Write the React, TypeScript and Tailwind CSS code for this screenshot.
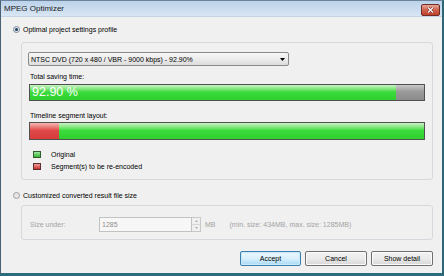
import React from 'react';

// MPEG Optimizer dialog (Vista look, scaled down)

const RadioChecked = () => (
  <span className="w-[7px] h-[7px] rounded-full border border-[#7d8b99] bg-[#dfe8f1] flex items-center justify-center shrink-0">
    <span className="w-[3px] h-[3px] rounded-full bg-[#1e3a5c]" />
  </span>
);

const RadioEmpty = () => (
  <span className="w-[7px] h-[7px] rounded-full border border-[#9c9c9c] bg-[#e6e6e6] shrink-0" />
);

const Button = ({ label, primary }: { label: string; primary?: boolean }) => (
  <div
    className={
      primary
        ? 'w-[61px] h-[15px] rounded-[2px] border border-[#3c7fb1] bg-linear-to-b from-[#eaf6fd] via-[#d9f0fc] to-[#a7d9f5] flex items-center justify-center text-[7px] leading-none shadow-[inset_0_0_0_1px_#c9e9fb]'
        : 'w-[62px] h-[15px] rounded-[2px] border border-[#707070] bg-linear-to-b from-[#f2f2f2] via-[#ebebeb] to-[#d6d6d6] flex items-center justify-center text-[7px] leading-none shadow-[inset_0_0_0_1px_#fbfbfb]'
    }
  >
    {label}
  </div>
);

export default function App() {
  return (
    <div className="w-[444px] h-[276px] flex flex-col bg-[#f0f0f0] border-t border-l border-r-2 border-b-[3px] border-t-[#6c859c] border-l-[#4a6073] border-r-[#2f6676] border-b-[#2a6b7c] font-['Liberation_Sans',Arial,sans-serif] text-black overflow-hidden">
      {/* title bar */}
      <div className="h-[16px] shrink-0 flex justify-between bg-linear-to-b from-[#bcd2ea] to-[#d8e6f4] border-b border-[#c4d4e4]">
        <div className="pl-[3px] pt-[3px] text-[8px] leading-[10px] text-[#1a1a1a]">MPEG Optimizer</div>
        <div className="mt-[3px] mr-[2px] w-[19px] h-[12px] rounded-[2px] border border-[#6e2e24] bg-linear-to-b from-[#e8a595] via-[#d0624e] to-[#c0402c] flex items-center justify-center">
          <svg width="7" height="6" viewBox="0 0 7 6">
            <path d="M1 0.5 L6 5.5 M6 0.5 L1 5.5" stroke="#5a1a12" strokeWidth="2.2" />
            <path d="M1 0.5 L6 5.5 M6 0.5 L1 5.5" stroke="#ffffff" strokeWidth="1.3" />
          </svg>
        </div>
      </div>

      {/* body */}
      <div className="flex-1 flex flex-col text-[7px]">
        <div className="mt-[8px] h-[9px] pl-[12px] flex items-center gap-[3px]">
          <RadioChecked />
          <span className="leading-none">Optimal project settings profile</span>
        </div>

        {/* group 1 */}
        <div className="mt-[8px] ml-[20px] w-[412px] h-[138px] border border-[#d5d9dd] rounded-[3px] flex flex-col">
          <div className="mt-[9px] ml-[6px] w-[261px] h-[14px] rounded-[2px] border border-[#8a8a8a] bg-linear-to-b from-[#f6f6f6] via-[#ececec] to-[#dcdcdc] flex items-center justify-between pl-[2px] pr-[3px]">
            <span className="leading-none">NTSC DVD (720 x 480 / VBR - 9000 kbps) - 92.90%</span>
            <svg width="5" height="3" viewBox="0 0 5 3">
              <path d="M0 0 H5 L2.5 3 Z" fill="#000" />
            </svg>
          </div>

          <div className="mt-[7px] ml-[8px] h-[8px] leading-[8px]">Total saving time:</div>
          <div className="mt-[3px] ml-[7px] w-[396px] h-[17px] border border-[#505050] flex relative">
            <div className="flex-1 bg-linear-to-b from-[#c7f3c3] via-[#3ddc3d] via-45% to-[#2fcf2f]" />
            <div className="w-[28px] bg-linear-to-b from-[#c9c9c9] via-[#9a9a9a] via-45% to-[#8c8c8c]" />
            <span className="absolute left-[2px] top-0 h-full flex items-center text-[12.5px] leading-none text-white">92.90 %</span>
          </div>

          <div className="mt-[11px] ml-[8px] h-[8px] leading-[8px]">Timeline segment layout:</div>
          <div className="mt-[2px] ml-[7px] w-[396px] h-[18px] border border-[#505050] flex">
            <div className="w-[29px] bg-linear-to-b from-[#f4b5b5] via-[#e04a4a] via-45% to-[#d83a3a]" />
            <div className="flex-1 bg-linear-to-b from-[#c7f3c3] via-[#3ddc3d] via-45% to-[#2fcf2f]" />
          </div>

          <div className="mt-[11px] ml-[11px] h-[7px] flex items-center gap-[10px]">
            <span className="w-[8px] h-[7px] border border-[#2e5d2e] bg-linear-to-b from-[#9be59b] to-[#2fb62f]" />
            <span className="leading-none">Original</span>
          </div>
          <div className="mt-[5px] ml-[11px] h-[7px] flex items-center gap-[10px]">
            <span className="w-[8px] h-[7px] border border-[#5d2e2e] bg-linear-to-b from-[#f09a9a] to-[#c82a2a]" />
            <span className="leading-none">Segment(s) to be re-encoded</span>
          </div>
        </div>

        <div className="mt-[11px] h-[9px] pl-[12px] flex items-center gap-[3px]">
          <RadioEmpty />
          <span className="leading-none">Customized converted result file size</span>
        </div>

        {/* group 2 */}
        <div className="mt-[5px] ml-[20px] w-[412px] h-[35px] border border-[#d5d9dd] rounded-[3px] flex flex-col">
          <div className="mt-[11px] ml-[8px] h-[15px] flex items-center text-[#a3a3a3]">
            <span className="w-[69px] leading-none">Size under:</span>
            <div className="w-[102px] h-[15px] flex">
              <div className="flex-1 border border-[#c2c2c2] bg-[#f7f7f7] flex items-center pl-[2px] text-[#8f8f8f] leading-none">1285</div>
              <div className="w-[9px] flex flex-col border-y border-r border-[#c8c8c8]">
                <div className="flex-1 border-b border-[#d8d8d8] flex items-center justify-center">
                  <svg width="3" height="2" viewBox="0 0 3 2"><path d="M0 2 L1.5 0 L3 2 Z" fill="#b0b0b0" /></svg>
                </div>
                <div className="flex-1 flex items-center justify-center">
                  <svg width="3" height="2" viewBox="0 0 3 2"><path d="M0 0 H3 L1.5 2 Z" fill="#b0b0b0" /></svg>
                </div>
              </div>
            </div>
            <span className="ml-[4px] leading-none">MB</span>
            <span className="ml-[14px] leading-none">(min. size: 434MB, max. size: 1285MB)</span>
          </div>
        </div>

        <div className="mt-[11px] pr-[9px] flex justify-end gap-[4px]">
          <Button label="Accept" primary />
          <Button label="Cancel" />
          <Button label="Show detail" />
        </div>
      </div>
    </div>
  );
}
